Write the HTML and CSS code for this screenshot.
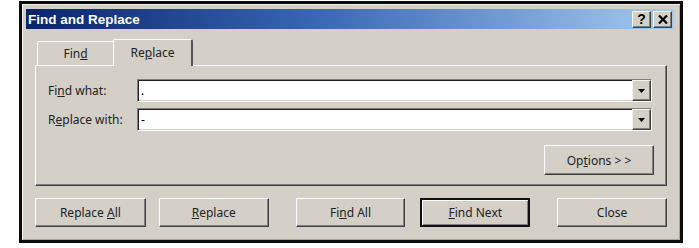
FILE: index.html
```html
<!DOCTYPE html>
<html lang="en">
<head>
    <meta charset="UTF-8">
    <meta name="viewport" content="width=device-width, initial-scale=1.0">
    <title>Find and Replace</title>
    <link rel="stylesheet" href="styles.css">
</head>
<body>
    <div class="dialog">
        <div class="titlebar">
            <span class="title">Find and Replace</span>
            <div class="caption-btns">
                <button class="cap-btn">?</button>
                <button class="cap-btn">
                    <svg width="10" height="9" viewBox="0 0 10 9"><path d="M1 0.5 L9 8.5 M9 0.5 L1 8.5" stroke="#000" stroke-width="2.2"/></svg>
                </button>
            </div>
        </div>
        <div class="content">
            <div class="tabs">
                <div class="tab">Fin<u>d</u></div>
                <div class="tab active">Re<u>p</u>lace</div>
            </div>
            <div class="panel">
                <div class="row">
                    <label class="label">Fi<u>n</u>d what:</label>
                    <div class="combo">
                        <span class="combo-text">.</span>
                        <span class="combo-btn"><svg width="7" height="4" viewBox="0 0 7 4"><path d="M0 0 H7 L3.5 4 Z" fill="#000"/></svg></span>
                    </div>
                </div>
                <div class="row">
                    <label class="label">R<u>e</u>place with:</label>
                    <div class="combo">
                        <span class="combo-text">-</span>
                        <span class="combo-btn"><svg width="7" height="4" viewBox="0 0 7 4"><path d="M0 0 H7 L3.5 4 Z" fill="#000"/></svg></span>
                    </div>
                </div>
                <div class="options-row">
                    <button class="btn options">Op<u>t</u>ions &gt; &gt;</button>
                </div>
            </div>
            <div class="actions">
                <button class="btn">Replace <u>A</u>ll</button>
                <button class="btn gap-sm"><u>R</u>eplace</button>
                <button class="btn gap-lg">Fi<u>n</u>d All</button>
                <button class="btn gap-md default"><u>F</u>ind Next</button>
                <button class="btn gap-lg">Close</button>
            </div>
        </div>
    </div>
</body>
</html>
```

FILE: styles.css
```css
body {
    margin: 0;
    background-color: #fff;
    font-family: "Noto Sans", "Liberation Sans", sans-serif;
    font-size: 12px;
    color: #111;
}
.dialog {
    width: 664px;
    margin: 1px 0 0 19px;
    box-sizing: border-box;
    border: 3px solid #0b0b0b;
    background-color: #d4d0c8;
    box-shadow: inset 1px 1px 0 #f2f1ed, inset -1px -1px 0 #a9a69f;
}
.titlebar {
    height: 20px;
    margin: 5px 6px 0 4px;
    display: flex;
    align-items: center;
    justify-content: space-between;
    background: linear-gradient(to right, #0a246a 0%, #3a67b4 45%, #a6caf0 100%);
}
.title {
    font-family: "Liberation Sans", Arial, sans-serif;
    font-weight: bold;
    font-size: 13.5px;
    color: #fff;
    padding-left: 2px;
}
.caption-btns {
    display: flex;
    gap: 2px;
    padding-right: 2px;
}
.cap-btn {
    width: 19px;
    height: 17px;
    padding: 0;
    display: flex;
    align-items: center;
    justify-content: center;
    background-color: #d4d0c8;
    border: 1px solid;
    border-color: #fff #404040 #404040 #fff;
    box-shadow: inset -1px -1px 0 #808080;
    font-family: "Liberation Sans", Arial, sans-serif;
    font-weight: bold;
    font-size: 14px;
    color: #000;
}
.content {
    padding: 10px 13px 13px 13px;
}
.tabs {
    display: flex;
    align-items: flex-end;
    height: 27px;
    margin-bottom: -1px;
    padding-left: 2px;
    position: relative;
    z-index: 1;
}
.tab {
    width: 76px;
    height: 24px;
    margin-bottom: 1px;
    box-sizing: border-box;
    display: flex;
    align-items: center;
    justify-content: center;
    border-top: 1px solid #fff;
    border-left: 1px solid #fff;
    border-top-left-radius: 2px;
    background-color: #d4d0c8;
    color: #222;
}
.tab.active {
    width: 80px;
    height: 27px;
    margin-bottom: 0;
    border-right: 2px solid #555;
    border-top-right-radius: 2px;
    padding-bottom: 2px;
}
.panel {
    height: 121px;
    box-sizing: border-box;
    padding: 13px 14px 10px 12px;
    border: 1px solid;
    border-color: #fff #404040 #404040 #fff;
    box-shadow: inset -1px -1px 0 #808080;
    display: flex;
    flex-direction: column;
    gap: 6px;
}
.row {
    display: flex;
    align-items: center;
    height: 23px;
}
.label {
    width: 89px;
    flex-shrink: 0;
    color: #222;
}
.combo {
    flex: 1;
    height: 23px;
    box-sizing: border-box;
    display: flex;
    align-items: center;
    justify-content: space-between;
    background-color: #fff;
    border: 1px solid;
    border-color: #808080 #fff #fff #808080;
    box-shadow: inset 1px 1px 0 #202020, inset -1px -1px 0 #d4d0c8;
}
.combo-text {
    padding-left: 3px;
    color: #000;
}
.combo-btn {
    width: 19px;
    height: 21px;
    box-sizing: border-box;
    display: flex;
    align-items: center;
    justify-content: center;
    background-color: #d4d0c8;
    border: 1px solid;
    border-color: #f4f3ef #404040 #404040 #f4f3ef;
    box-shadow: inset -1px -1px 0 #808080;
}
.options-row {
    display: flex;
    justify-content: flex-end;
    margin-top: 8px;
    margin-right: -2px;
}
.btn {
    width: 110px;
    height: 30px;
    box-sizing: border-box;
    padding: 0;
    background-color: #d4d0c8;
    border: 1px solid;
    border-color: #fff #404040 #404040 #fff;
    box-shadow: inset -1px -1px 0 #808080;
    font-family: "Noto Sans", "Liberation Sans", sans-serif;
    font-size: 12px;
    color: #222;
}
.btn.default {
    border: 2px solid #111;
    box-shadow: inset 1px 1px 0 #fff, inset -1px -1px 0 #808080;
}
.actions {
    display: flex;
    margin-top: 12px;
}
.actions .btn {
    height: 29px;
}
.actions .btn:first-child {
    width: 111px;
}
.gap-sm {
    margin-left: 13px;
}
.gap-md {
    margin-left: 15px;
}
.gap-lg {
    margin-left: 27px;
}
```
